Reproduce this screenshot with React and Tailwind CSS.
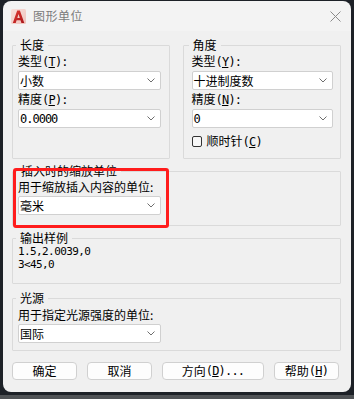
import React from "react";

const mono = "font-['DejaVu_Sans_Mono','Liberation_Mono',monospace]";

function Chevron() {
  return (
    <svg width="8" height="5" viewBox="0 0 8 5" className="shrink-0">
      <path d="M0.5 0.5 L4 4 L7.5 0.5" fill="none" stroke="#6e6e6e" strokeWidth="1" />
    </svg>
  );
}

function Select({ children, className = "" }) {
  return (
    <div className={"h-[19px] bg-white border border-[#d0d0d0] rounded-[2px] flex items-center justify-between pl-[1px] pr-[5px] " + className}>
      <span className="text-[12px] leading-[17px] text-black whitespace-nowrap">{children}</span>
      <Chevron />
    </div>
  );
}

function Key({ k, after = "):" }) {
  return (
    <span className={mono + " text-[12px] tracking-[-0.8px]"}>
      (<u className="underline-offset-[1px]">{k}</u>{after}
    </span>
  );
}

function Group({ title, className = "", children, legendClass = "ml-[3px]" }) {
  return (
    <fieldset className={"border border-[#dadada] rounded-[1px] " + className}>
      <legend className={"px-[4px] text-[12px] leading-[14px] text-black " + legendClass}>{title}</legend>
      {children}
    </fieldset>
  );
}

function Button({ children, className = "" }) {
  return (
    <div className={"h-[18px] bg-[#fdfdfd] border border-[#d0d0d0] rounded-[4px] flex items-center justify-center text-[12px] leading-[16px] text-black " + className}>
      {children}
    </div>
  );
}

export default function App() {
  return (
    <div className="w-[354px] h-[399px] bg-[#1d2127] flex flex-col overflow-hidden font-['Noto_Sans_CJK_SC','Noto_Sans',sans-serif]">
      <div className="ml-[3px] mt-[1px] w-[348px] h-[391px] rounded-[8px] overflow-hidden flex flex-col shrink-0">
        {/* Title bar */}
        <div className="h-[30px] bg-[#f3f3f3] flex items-center pl-[8px] pr-[10px] shrink-0">
          <svg width="15" height="15" viewBox="0 0 15 15" className="shrink-0">
            <defs>
              <linearGradient id="bgA" x1="0" y1="0" x2="1" y2="1">
                <stop offset="0" stopColor="#f8e0dc" />
                <stop offset="1" stopColor="#efc2bb" />
              </linearGradient>
              <linearGradient id="redA" x1="0" y1="0" x2="1" y2="1">
                <stop offset="0" stopColor="#e23a33" />
                <stop offset="1" stopColor="#a8161a" />
              </linearGradient>
            </defs>
            <rect x="0" y="0" width="15" height="15" rx="1.5" fill="url(#bgA)" />
            <path
              fillRule="evenodd"
              fill="url(#redA)"
              d="M1.8 14 L6.2 1.4 L8.9 1.4 L13.3 14 L10.4 14 L9.5 11.2 L5.6 11.2 L4.7 14 Z M6.3 8.9 L8.8 8.9 L7.55 4.9 Z"
            />
          </svg>
          <span className="ml-[7px] text-[12px] leading-[14px] text-[#7b7b7b] tracking-[0.5px]">图形单位</span>
          <div className="flex-1" />
          <svg width="11" height="11" viewBox="0 0 11 11">
            <path d="M0.5 0.5 L10.5 10.5 M10.5 0.5 L0.5 10.5" stroke="#8a8a8a" strokeWidth="1" />
          </svg>
        </div>

        {/* Body */}
        <div className="flex-1 bg-[#f0f0f0] relative flex flex-col pl-[9px] pr-[10px] pt-[7px] text-black">
          {/* top row */}
          <div className="flex gap-[13px]">
            <Group title="长度" className="w-[158px] h-[121px]">
              <div className="pl-[5px] pr-[8px]">
                <div className="text-[12px] leading-[18px]">类型<Key k="T" /></div>
                <Select>小数</Select>
                <div className="text-[12px] leading-[18px]">精度<Key k="P" /></div>
                <Select><span className={mono + " text-[12px] tracking-[-1px]"}>0.0000</span></Select>
              </div>
            </Group>
            <Group title="角度" className="w-[159px] h-[121px]" legendClass="ml-[5px]">
              <div className="pl-[8px] pr-[7px]">
                <div className="text-[12px] leading-[18px]">类型<Key k="Y" /></div>
                <Select>十进制度数</Select>
                <div className="text-[12px] leading-[18px]">精度<Key k="N" /></div>
                <Select><span className={mono + " text-[12px]"}>0</span></Select>
                <div className="mt-[7px] flex items-center h-[13px]">
                  <div className="w-[10px] h-[11px] border border-[#333333] rounded-[2px] bg-[#f7f7f7]" />
                  <span className="ml-[5px] text-[12px] leading-[14px] whitespace-nowrap">顺时针<Key k="C" after=")" /></span>
                </div>
              </div>
            </Group>
          </div>

          {/* insert units */}
          <Group title="插入时的缩放单位" className="mt-[5px] h-[62px]" legendClass="ml-[4px]">
            <div className="pl-[5px] w-[148px]">
              <div className="text-[12px] leading-[18px] whitespace-nowrap">用于缩放插入内容的单位:</div>
              <Select>毫米</Select>
            </div>
          </Group>

          {/* output sample */}
          <Group title="输出样例" className="mt-[5px] h-[53px]" legendClass="ml-[3px]">
            <div className={"pl-[5px] text-[11px] leading-[13px] tracking-[-0.6px] " + mono}>
              <div>1.5,2.0039,0</div>
              <div>3&lt;45,0</div>
            </div>
          </Group>

          {/* light source */}
          <Group title="光源" className="mt-[7px] h-[60px]" legendClass="ml-[3px]">
            <div className="pl-[5px] w-[148px]">
              <div className="text-[12px] leading-[19px] whitespace-nowrap">用于指定光源强度的单位:</div>
              <Select>国际</Select>
            </div>
          </Group>

          {/* buttons */}
          <div className="mt-[11px] flex gap-[10px]">
            <Button className="w-[65px]">确定</Button>
            <Button className="w-[65px]">取消</Button>
            <Button className="w-[102px]">方向<Key k="D" after=")..." /></Button>
            <Button className="w-[65px]">帮助<Key k="H" after=")" /></Button>
          </div>

          {/* red annotation box */}
          <div className="absolute left-[10px] top-[137px] w-[156px] h-[60px] border-[3px] border-[#ff1c1c] rounded-[3px] pointer-events-none" />
        </div>
      </div>
      <div className="h-[3px] shrink-0" />
      <div className="h-[4px] bg-[#505356] shrink-0" />
    </div>
  );
}
